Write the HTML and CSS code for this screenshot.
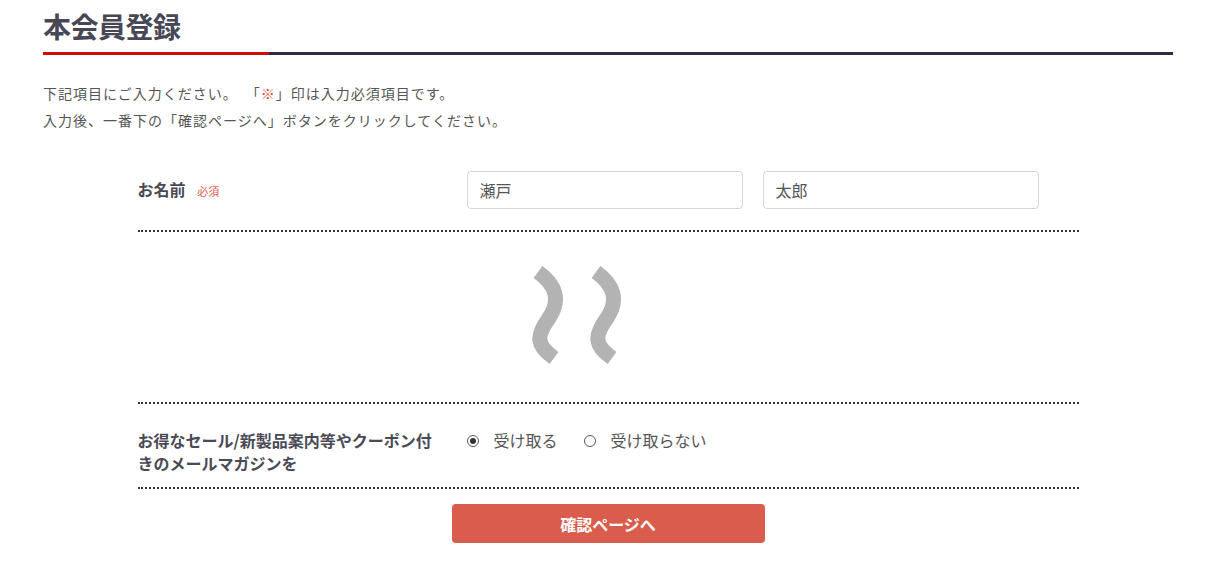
FILE: index.html
```html
<!DOCTYPE html>
<html lang="ja">
<head>
    <meta charset="UTF-8">
    <meta name="viewport" content="width=device-width, initial-scale=1.0">
    <title>本会員登録</title>
    <link rel="stylesheet" href="styles.css">
</head>
<body>
    <div class="container">
        <h1>本会員登録</h1>
        <div class="title-bar"><span class="accent"></span><span class="rest"></span></div>

        <p class="intro">
            下記項目にご入力ください。&ensp;「<span class="mark">※</span>」印は入力必須項目です。<br>
            入力後、一番下の「確認ページへ」ボタンをクリックしてください。
        </p>

        <form class="form" id="registerForm">
            <div class="row">
                <div class="label">お名前 <span class="required">必須</span></div>
                <div class="fields">
                    <input type="text" class="text-input" value="瀬戸">
                    <input type="text" class="text-input" value="太郎">
                </div>
            </div>

            <div class="omitted">
                <svg width="100" height="100" viewBox="0 0 100 100">
                    <path d="M12,6 C30,19 35,34 23,52 C10,70 10,79 28,92" fill="none" stroke="#b3b3b3" stroke-width="15"/>
                    <path d="M70,6 C88,19 93,34 81,52 C68,70 68,79 86,92" fill="none" stroke="#b3b3b3" stroke-width="15"/>
                </svg>
            </div>

            <div class="row row-magazine">
                <div class="label">お得なセール/新製品案内等やクーポン付きのメールマガジンを</div>
                <div class="fields radios">
                    <label class="radio"><input type="radio" name="magazine" checked> 受け取る</label>
                    <label class="radio"><input type="radio" name="magazine"> 受け取らない</label>
                </div>
            </div>

            <div class="actions">
                <button type="submit" class="submit">確認ページへ</button>
            </div>
        </form>
    </div>
</body>
</html>
```

FILE: styles.css
```css
body {
    margin: 0;
    font-family: "Noto Sans CJK JP", "Noto Sans", sans-serif;
    background-color: #fff;
    color: #555;
}

.container {
    width: 1130px;
    margin-left: 43px;
    padding-top: 9px;
}

h1 {
    margin: 0;
    font-size: 28px;
    line-height: 34px;
    font-weight: bold;
    color: #474756;
    letter-spacing: -0.5px;
}

.title-bar {
    display: flex;
    height: 3px;
    margin-top: 9px;
}

.title-bar .accent {
    width: 226px;
    background-color: #d20a0a;
}

.title-bar .rest {
    flex: 1;
    background-color: #2b2d42;
}

.intro {
    margin: 25px 0 0;
    font-size: 14px;
    line-height: 27px;
    letter-spacing: 1px;
    color: #555;
}

.intro .mark {
    color: #e0403a;
}

.form {
    width: 941px;
    margin: 17px auto 0;
}

.row {
    display: flex;
    align-items: center;
    padding: 20px 0 21px;
    border-bottom: 2px dotted #333;
}

.label {
    width: 329px;
    box-sizing: border-box;
    padding-right: 25px;
    font-size: 16px;
    line-height: 23px;
    font-weight: bold;
    color: #4a4a55;
}

.required {
    margin-left: 8px;
    font-size: 11px;
    font-weight: normal;
    color: #e0604e;
}

.fields {
    display: flex;
    gap: 20px;
}

.text-input {
    width: 276px;
    height: 38px;
    box-sizing: border-box;
    padding: 0 12px;
    border: 1px solid #d6d6d6;
    border-radius: 4px;
    font-family: inherit;
    font-size: 16px;
    color: #555;
}

.omitted {
    height: 172px;
    border-bottom: 2px dotted #333;
    padding: 34px 0 0 388px;
    box-sizing: border-box;
}

.omitted svg {
    display: block;
}

.row-magazine {
    align-items: flex-start;
    padding: 25px 0 12px;
}

.radios {
    gap: 26px;
    line-height: 23px;
}

.radio {
    display: flex;
    align-items: center;
    gap: 15px;
    font-size: 16px;
    color: #555;
}

.radio input {
    appearance: none;
    -webkit-appearance: none;
    width: 12px;
    height: 12px;
    margin: 0;
    border: 1px solid #555;
    border-radius: 50%;
    box-sizing: border-box;
    display: grid;
    place-items: center;
}

.radio input:checked::before {
    content: "";
    width: 6px;
    height: 6px;
    border-radius: 50%;
    background-color: #333;
}

.actions {
    display: flex;
    justify-content: center;
    padding-top: 15px;
}

.submit {
    width: 313px;
    height: 39px;
    border: none;
    border-radius: 4px;
    background-color: #d95c4c;
    color: #fff;
    font-family: inherit;
    font-size: 16px;
    font-weight: bold;
    cursor: pointer;
}
```
